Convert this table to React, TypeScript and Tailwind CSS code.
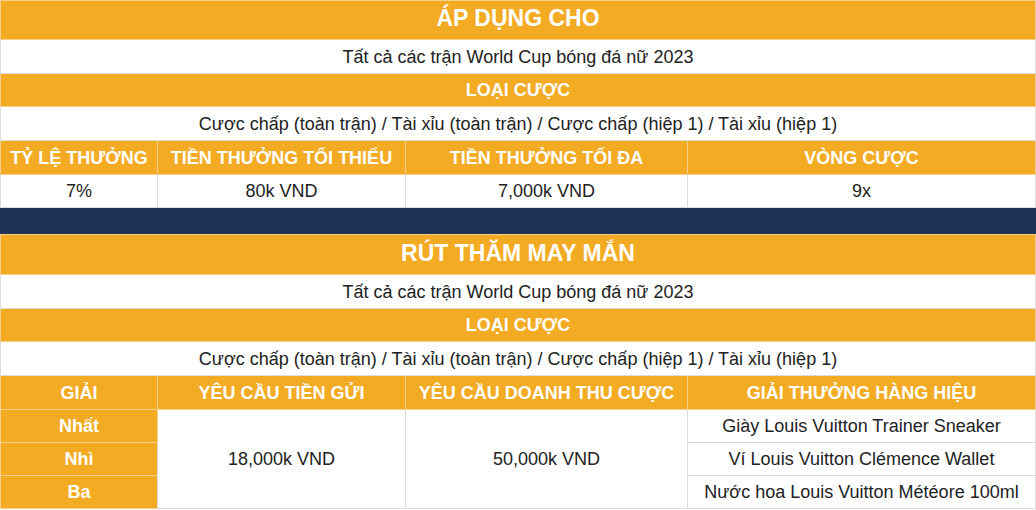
import React from 'react';

const cell = 'border text-center align-middle p-0 leading-none';
const head = `${cell} border-[#f3d08e] bg-[#f4ab24] text-white font-bold`;
const body = `${cell} border-[#dcdcdc] bg-white text-[#222]`;

function PromoTable() {
  return (
    <table className="w-full border-collapse table-fixed">
      <colgroup>
        <col className="w-[157px]" />
        <col className="w-[248px]" />
        <col className="w-[282px]" />
        <col />
      </colgroup>
      <tbody>
        <tr className="h-[39px]">
          <td colSpan={4} className={`${head} text-[23px] pb-[3px]`}>ÁP DỤNG CHO</td>
        </tr>
        <tr className="h-[34px]">
          <td colSpan={4} className={`${body} text-[18px]`}>Tất cả các trận World Cup bóng đá nữ 2023</td>
        </tr>
        <tr className="h-[33px]">
          <td colSpan={4} className={`${head} text-[18px]`}>LOẠI CƯỢC</td>
        </tr>
        <tr className="h-[34px]">
          <td colSpan={4} className={`${body} text-[18px]`}>
            Cược chấp (toàn trận) / Tài xỉu (toàn trận) / Cược chấp (hiệp 1) / Tài xỉu (hiệp 1)
          </td>
        </tr>
        <tr className="h-[34px]">
          <td className={`${head} text-[18px]`}>TỶ LỆ THƯỞNG</td>
          <td className={`${head} text-[18px]`}>TIỀN THƯỞNG TỐI THIỂU</td>
          <td className={`${head} text-[18px]`}>TIỀN THƯỞNG TỐI ĐA</td>
          <td className={`${head} text-[18px]`}>VÒNG CƯỢC</td>
        </tr>
        <tr className="h-[33px]">
          <td className={`${body} text-[18px]`}>7%</td>
          <td className={`${body} text-[18px]`}>80k VND</td>
          <td className={`${body} text-[18px]`}>7,000k VND</td>
          <td className={`${body} text-[18px]`}>9x</td>
        </tr>
      </tbody>
    </table>
  );
}

function LuckyDrawTable() {
  const prizes = [
    ['Nhất', 'Giày Louis Vuitton Trainer Sneaker'],
    ['Nhì', 'Ví Louis Vuitton Clémence Wallet'],
    ['Ba', 'Nước hoa Louis Vuitton Météore 100ml'],
  ];
  return (
    <table className="w-full border-collapse table-fixed">
      <colgroup>
        <col className="w-[157px]" />
        <col className="w-[248px]" />
        <col className="w-[282px]" />
        <col />
      </colgroup>
      <tbody>
        <tr className="h-[40px]">
          <td colSpan={4} className={`${head} text-[23px] pb-[2px]`}>RÚT THĂM MAY MẮN</td>
        </tr>
        <tr className="h-[34px]">
          <td colSpan={4} className={`${body} text-[18px]`}>Tất cả các trận World Cup bóng đá nữ 2023</td>
        </tr>
        <tr className="h-[33px]">
          <td colSpan={4} className={`${head} text-[18px]`}>LOẠI CƯỢC</td>
        </tr>
        <tr className="h-[34px]">
          <td colSpan={4} className={`${body} text-[18px]`}>
            Cược chấp (toàn trận) / Tài xỉu (toàn trận) / Cược chấp (hiệp 1) / Tài xỉu (hiệp 1)
          </td>
        </tr>
        <tr className="h-[34px]">
          <td className={`${head} text-[18px]`}>GIẢI</td>
          <td className={`${head} text-[18px]`}>YÊU CẦU TIỀN GỬI</td>
          <td className={`${head} text-[18px]`}>YÊU CẦU DOANH THU CƯỢC</td>
          <td className={`${head} text-[18px]`}>GIẢI THƯỞNG HÀNG HIỆU</td>
        </tr>
        {prizes.map(([rank, prize], i) => (
          <tr key={rank} className="h-[33px]">
            <td className={`${head} text-[18px]`}>{rank}</td>
            {i === 0 && (
              <>
                <td rowSpan={3} className={`${body} text-[18px]`}>18,000k VND</td>
                <td rowSpan={3} className={`${body} text-[18px]`}>50,000k VND</td>
              </>
            )}
            <td className={`${body} text-[18px]`}>{prize}</td>
          </tr>
        ))}
      </tbody>
    </table>
  );
}

export default function App() {
  return (
    <div className="w-[1036px] h-[510px] overflow-hidden bg-white font-['Liberation_Sans',Arial,sans-serif]">
      <PromoTable />
      <div className="h-[26px] bg-[#203354]" />
      <LuckyDrawTable />
    </div>
  );
}
